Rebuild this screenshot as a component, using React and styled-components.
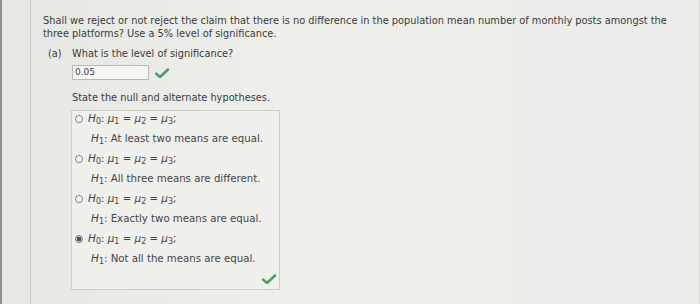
import React from "react"
import styled, { createGlobalStyle } from "styled-components"

const GlobalStyle = createGlobalStyle`
  html, body {
    margin: 0;
    padding: 0;
    background: #ebebe7;
  }
  body {
    font-family: "DejaVu Sans", Verdana, sans-serif;
    color: #3b3b3b;
  }
`

const Page = styled.div`
  display: flex;
  width: 700px;
  height: 304px;
  box-sizing: border-box;
  background: linear-gradient(90deg, #e6e6e3 0%, #eeeeeb 40%, #ececea 100%);
  border-left: 2px solid #8e8e8b;
  border-right: 1px solid #d6d6d2;
  overflow: hidden;
`

const Gutter = styled.div`
  width: 28px;
  flex: none;
  border-right: 1px solid #cbcbc6;
`

const Content = styled.div`
  flex: 1;
  padding: 14px 0 0 12px;
  font-size: 9.8px;
  line-height: 13px;
`

const Question = styled.p`
  margin: 0;
  width: 640px;
`

const Part = styled.div`
  display: grid;
  grid-template-columns: 29px 1fr;
  margin-top: 7px;
`

const PartLabel = styled.div`
  padding-left: 5px;
`

const Prompt = styled.div``

const AnswerRow = styled.div`
  display: flex;
  align-items: center;
  gap: 6px;
  margin-top: 5px;
`

const Field = styled.div`
  width: 77px;
  height: 15px;
  box-sizing: border-box;
  border: 1px solid #b9b9b4;
  background: #f6f6f3;
  padding-left: 2px;
  font-size: 9px;
  line-height: 13px;
  color: #444;
`

const Instruction = styled.div`
  margin-top: 11px;
`

const Choices = styled.div`
  width: 209px;
  margin: 6px 0 0 -1px;
  box-sizing: border-box;
  border: 1px solid #cfcfca;
  background: #efefec;
  padding: 1px 3px 0 3px;
`

const Choice = styled.div`
  display: grid;
  grid-template-columns: 13px 1fr;
  row-gap: 6px;
  margin-bottom: 6px;
`

const Radio = styled.span`
  width: 8px;
  height: 8px;
  margin-top: 3px;
  border-radius: 50%;
  box-sizing: border-box;
  border: 1px solid ${p => (p.$on ? "#6f7a8e" : "#7c7c7c")};
  background: ${p => (p.$on ? "radial-gradient(circle, #4b4f5c 0 2px, #c9cfdc 2.5px)" : "#fbfbfb")};
`

const Line = styled.div`
  height: 14px;
  line-height: 14px;
  white-space: nowrap;
  grid-column: ${p => (p.$alt ? 2 : "auto")};
  padding-left: ${p => (p.$alt ? "3px" : "0")};
  font-size: 10.2px;
  color: #454545;
`

const Var = styled.i`
  font-style: italic;
  font-size: 10.5px;
  line-height: 0;
`

const Sub = styled.sub`
  font-size: 8px;
  line-height: 0;
  vertical-align: -2px;
  font-style: normal;
`

const Footer = styled.div`
  display: flex;
  justify-content: flex-end;
  height: 17px;
  padding-top: 2px;
  box-sizing: border-box;
`

function Check() {
  return (
    <svg width="14" height="10" viewBox="0 0 14 10">
      <path d="M1 5.5 L5 9 L13 1.5" fill="none" stroke="#4e9a60" strokeWidth="2.4" strokeLinecap="round" strokeLinejoin="round" />
    </svg>
  )
}

function Mu({ n }) {
  return (
    <>
      <Var>μ</Var>
      <Sub>{n}</Sub>
    </>
  )
}

function Null() {
  return (
    <>
      <Var>H</Var>
      <Sub>0</Sub>: <Mu n="1" /> = <Mu n="2" /> = <Mu n="3" />;
    </>
  )
}

const choices = [
  { alt: "At least two means are equal." },
  { alt: "All three means are different." },
  { alt: "Exactly two means are equal." },
  { alt: "Not all the means are equal.", on: true },
]

export default function App() {
  return (
    <>
      <GlobalStyle />
      <Page>
        <Gutter />
        <Content>
          <Question>
            Shall we reject or not reject the claim that there is no difference in the population mean number of monthly posts amongst the
            three platforms? Use a 5% level of significance.
          </Question>
          <Part>
            <PartLabel>(a)</PartLabel>
            <div>
              <Prompt>What is the level of significance?</Prompt>
              <AnswerRow>
                <Field>0.05</Field>
                <Check />
              </AnswerRow>
              <Instruction>State the null and alternate hypotheses.</Instruction>
              <Choices>
                {choices.map(c => (
                  <Choice key={c.alt}>
                    <Radio $on={c.on} />
                    <Line>
                      <Null />
                    </Line>
                    <Line $alt>
                      <Var>H</Var>
                      <Sub>1</Sub>: {c.alt}
                    </Line>
                  </Choice>
                ))}
                <Footer>
                  <Check />
                </Footer>
              </Choices>
            </div>
          </Part>
        </Content>
      </Page>
    </>
  )
}
